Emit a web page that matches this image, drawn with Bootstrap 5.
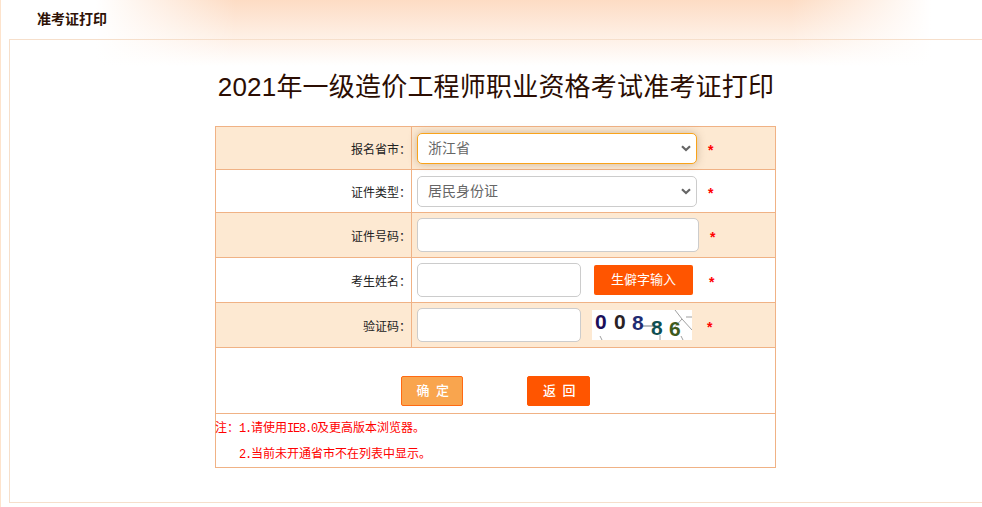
<!DOCTYPE html>
<html lang="zh-CN">
<head>
    <meta charset="UTF-8">
    <meta name="viewport" content="width=device-width, initial-scale=1.0">
    <title>准考证打印</title>
    <link href="https://cdn.jsdelivr.net/npm/bootstrap@5.3.0/dist/css/bootstrap.min.css" rel="stylesheet">
    <style>
        html, body { height: 100%; overflow: hidden; }
        body {
            font-family: "Liberation Sans", "Noto Sans CJK SC", sans-serif;
            font-size: 12px;
            color: #222;
            background: #fff;
        }
        .page-shell {
            height: 507px;
            border-left: 1px solid #fde3cc;
            background:
                linear-gradient(to right, #fff 95px, rgba(255, 255, 255, 0) 235px, rgba(255, 255, 255, 0) 790px, #fff 930px),
                linear-gradient(to bottom, #fddcc4 0, #fff 66px);
        }
        .page-head { height: 39px; padding-left: 36px; }
        .page-head-title { font-weight: 700; font-size: 14px; color: #2e1206; }
        .page-box {
            height: 464px;
            margin-left: 8px;
            border: 1px solid #f6dfcb;
            border-right: 0;
            padding-top: 29px;
        }
        .page-title { margin: 0 0 20px; width: 972px; height: 37px; line-height: 37px; font-size: 26px; font-weight: 400; letter-spacing: .2px; color: #2b0d02; text-align: center; }
        .form-tbl { width: 561px; margin: 0 0 0 205px; table-layout: fixed; --bs-table-bg: transparent; font-size: 12px; border-collapse: collapse; }
        .form-tbl > tbody > tr > td { padding: 0; vertical-align: middle; color: #222; border: 1px solid #f0b285; }
        .form-tbl > tbody > tr > .cell-label { width: 196px; text-align: right; padding-top: 3px; }
        .form-tbl > tbody > tr > .cell-field { padding-left: 5px; }
        .form-tbl > tbody > tr.row-tint > td { background: #fde9d2; }
        .h-43 { height: 43px; }
        .h-45 { height: 45px; }
        .form-select.field-ctl, .form-control.field-ctl {
            font-size: 14px;
            color: #666;
            padding: 0 28px 0 10px;
            border: 1px solid #ccc;
            border-radius: 5px;
            background-color: #fff;
            font-family: "Liberation Sans", "Noto Sans CJK SC", sans-serif;
        }
        .form-select.field-ctl {
            width: 280px; height: 31px; min-height: 0;
            background-image: url("data:image/svg+xml,%3csvg xmlns='http://www.w3.org/2000/svg' viewBox='0 0 10 7'%3e%3cpath fill='none' stroke='%23666' stroke-width='2.2' d='M1 1.2 5 5l4-3.8'/%3e%3c/svg%3e");
            background-size: 10px 7px;
            background-position: right 5px center;
        }
        .form-select.is-active { border-color: #f9a31a; box-shadow: 0 0 8px rgba(110, 90, 60, .35); }
        .form-control.field-wide { width: 282px; height: 34px; min-height: 0; }
        .form-control.field-short { width: 164px; height: 34px; min-height: 0; }
        .req-mark { color: #f00; font-size: 14px; font-weight: 700; line-height: 1; margin-top: 3px; }
        .gap-11 { margin-left: 11px; }
        .gap-13 { margin-left: 13px; }
        .gap-15 { margin-left: 15px; }
        .gap-16 { margin-left: 16px; }
        .btn-rare {
            width: 99px; height: 30px; padding: 0; font-size: 13px; line-height: 30px;
            color: #fff; background: #ff5500; border: 0; border-radius: 2px;
        }
        .captcha-pic { display: block; margin-left: 11px; }
        .action-wrap { height: 65px; padding: 28px 0 0 185px; gap: 64px; }
        .btn-ok, .btn-back {
            width: 62px; height: 30px; padding: 0 0 0 3px; font-size: 13px; line-height: 28px;
            color: #fff; border-radius: 2px; letter-spacing: 1.5px; font-weight: 500;
        }
        .btn-ok { background: #f9a54e; border: 1px solid #ff6a13; }
        .btn-back { background: #ff5500; border: 1px solid #ff5500; width: 63px; }
        .form-tbl > tbody > tr > .note-cell { height: 53px; color: #f00; padding-top: 1px; }
        .note-line { height: 26px; line-height: 26px; white-space: nowrap; margin-left: -1px; }
        .note-latin { font-family: "Liberation Mono", monospace; font-size: 12px; letter-spacing: -1.2px; }
        .note-indent { padding-left: 24px; }
    </style>
</head>
<body>
    <div class="page-shell">
        <div class="page-head d-flex align-items-center">
            <span class="page-head-title">准考证打印</span>
        </div>
        <div class="page-box">
            <h1 class="page-title">2021年一级造价工程师职业资格考试准考证打印</h1>
            <table class="table table-bordered form-tbl">
                <tbody>
                    <tr class="row-tint h-43">
                        <td class="cell-label">报名省市：</td>
                        <td class="cell-field">
                            <div class="d-flex align-items-center">
                                <select class="form-select field-ctl is-active"><option>浙江省</option></select>
                                <span class="req-mark gap-11">*</span>
                            </div>
                        </td>
                    </tr>
                    <tr class="h-43">
                        <td class="cell-label">证件类型：</td>
                        <td class="cell-field">
                            <div class="d-flex align-items-center">
                                <select class="form-select field-ctl"><option>居民身份证</option></select>
                                <span class="req-mark gap-11">*</span>
                            </div>
                        </td>
                    </tr>
                    <tr class="row-tint h-45">
                        <td class="cell-label">证件号码：</td>
                        <td class="cell-field">
                            <div class="d-flex align-items-center">
                                <input type="text" class="form-control field-ctl field-wide">
                                <span class="req-mark gap-11">*</span>
                            </div>
                        </td>
                    </tr>
                    <tr class="h-45">
                        <td class="cell-label">考生姓名：</td>
                        <td class="cell-field">
                            <div class="d-flex align-items-center">
                                <input type="text" class="form-control field-ctl field-short">
                                <button type="button" class="btn btn-rare gap-13">生僻字输入</button>
                                <span class="req-mark gap-16">*</span>
                            </div>
                        </td>
                    </tr>
                    <tr class="row-tint h-45">
                        <td class="cell-label">验证码：</td>
                        <td class="cell-field">
                            <div class="d-flex align-items-center">
                                <input type="text" class="form-control field-ctl field-short">
                                <svg class="captcha-pic" width="100" height="30" viewBox="0 0 100 30" xmlns="http://www.w3.org/2000/svg">
                                    <rect width="100" height="30" fill="#fff"/>
                                    <g fill="none" stroke="#777" stroke-width=".7">
                                        <path d="M83 0 90 9 100 20M90 9 80 20M94 7h6M8 26l2 4M68 25v5M89 26l2 4"/>
                                        <path d="M50 16h18" stroke="#345"/>
                                    </g>
                                    <g font-family="Liberation Sans, sans-serif" font-weight="700" font-size="21">
                                        <text x="3" y="19" fill="#1c0f5a">0</text>
                                        <text x="22" y="19" fill="#2a2224">0</text>
                                        <text x="40" y="20" fill="#1f2c72">8</text>
                                        <text x="59" y="25" fill="#0f4f52">8</text>
                                        <text x="77" y="26" fill="#3e5a1c">6</text>
                                    </g>
                                </svg>
                                <span class="req-mark gap-15">*</span>
                            </div>
                        </td>
                    </tr>
                    <tr>
                        <td colspan="2">
                            <div class="action-wrap d-flex">
                                <button type="button" class="btn btn-ok">确 定</button>
                                <button type="button" class="btn btn-back">返 回</button>
                            </div>
                        </td>
                    </tr>
                    <tr>
                        <td colspan="2" class="note-cell">
                            <div class="note-line">注：<span class="note-latin">1.</span>请使用<span class="note-latin">IE8.0</span>及更高版本浏览器。</div>
                            <div class="note-line note-indent"><span class="note-latin">2.</span>当前未开通省市不在列表中显示。</div>
                        </td>
                    </tr>
                </tbody>
            </table>
        </div>
    </div>
    <script src="https://cdn.jsdelivr.net/npm/bootstrap@5.3.0/dist/js/bootstrap.bundle.min.js"></script>
</body>
</html>
